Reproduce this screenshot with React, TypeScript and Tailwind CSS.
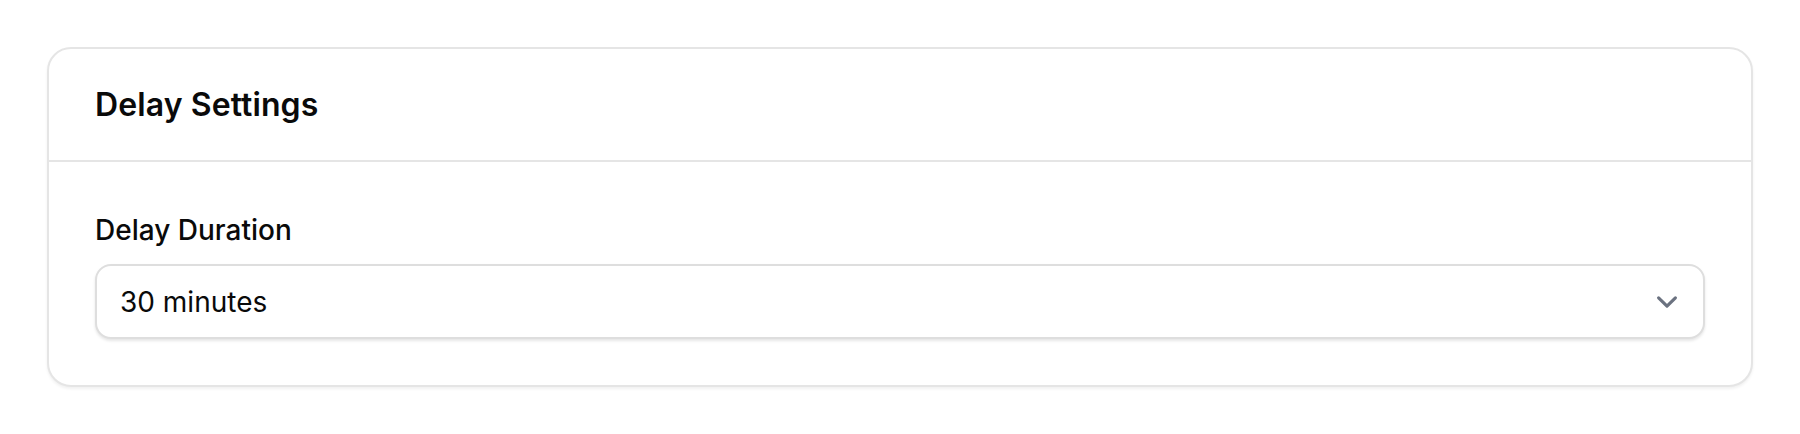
export default function App() {
  return (
    <div
      className="min-h-screen bg-white pt-[47px] px-[47px]"
      style={{ fontFamily: "Inter, 'Noto Sans', sans-serif" }}
    >
      <div className="border-2 border-[#e5e5e5] rounded-[24px] bg-white shadow-[0_2px_3px_rgba(0,0,0,0.06)]">
        {/* Header */}
        <div className="px-[46px] pt-[32px] pb-[31px] border-b-2 border-[#e5e5e5]">
          <h2 className="text-[32px] leading-[48px] font-semibold tracking-[0.1px] text-[#0a0a0a]">
            Delay Settings
          </h2>
        </div>

        {/* Body */}
        <div className="px-[46px] pt-[48px] pb-[46px]">
          <label className="block text-[28px] leading-[40px] font-medium text-[#0a0a0a]">
            Delay Duration
          </label>
          <div className="mt-[14px] flex items-center h-[75px] border-2 border-[#dedede] rounded-[16px] bg-white shadow-[0_2px_3px_rgba(0,0,0,0.1)] pl-[23px] pr-[15px]">
            <span className="flex-1 text-[28px] leading-[42px] text-[#0a0a0a]">
              30 minutes
            </span>
            <svg
              width="42"
              height="42"
              viewBox="0 0 20 20"
              fill="none"
              className="shrink-0"
            >
              <path
                d="M6 8l4 4 4-4"
                stroke="#6b7280"
                strokeWidth="1.5"
                strokeLinecap="round"
                strokeLinejoin="round"
              />
            </svg>
          </div>
        </div>
      </div>
    </div>
  );
}
